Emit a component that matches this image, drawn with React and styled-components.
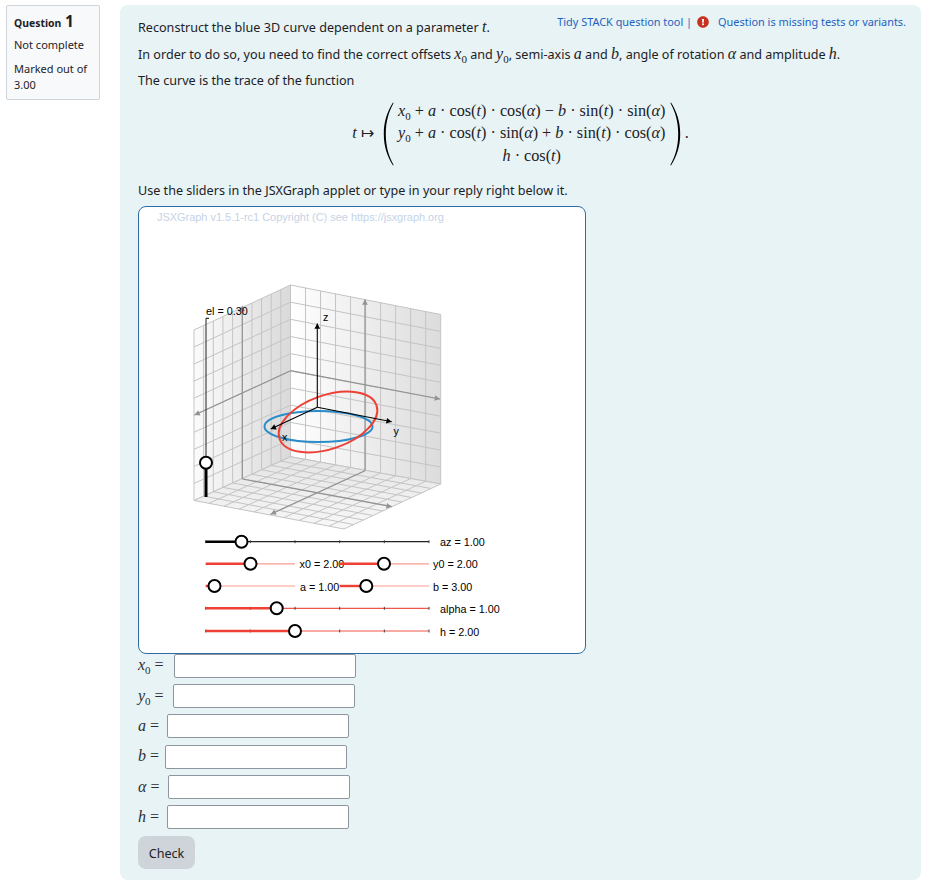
import React from 'react';
import styled, { createGlobalStyle } from 'styled-components';
import { FaExclamationCircle } from 'react-icons/fa';

const GlobalStyle = createGlobalStyle`
  html, body { margin: 0; padding: 0; background: #fff; }
  body { font-family: "Noto Sans", "Open Sans", sans-serif; font-size: 12.6px; line-height: 18.5px; color: #1d2125; }
`;

const Page = styled.div`
  display: flex;
  align-items: flex-start;
  gap: 20px;
  padding: 5px 6px 7px;
  width: 915px;
`;

const Info = styled.aside`
  box-sizing: border-box;
  width: 94px;
  height: 95px;
  padding: 7px 7px;
  background: #f8f9fa;
  border: 1px solid #ced4da;
  border-radius: 2px;
  font-size: 11px;
  line-height: 16px;
`;

const InfoTitle = styled.div`
  font-size: 10.4px;
  font-weight: 700;
  margin-bottom: 6px;
  span { font-size: 15.5px; margin-left: 1px; }
`;

const InfoLine = styled.div`
  margin-bottom: 8px;
`;

const Content = styled.main`
  box-sizing: border-box;
  width: 801px;
  height: 875px;
  padding: 14px 18px 10px;
  background: #e7f3f5;
  border-radius: 8px;
`;

const TidyLink = styled.div`
  float: right;
  display: flex;
  align-items: center;
  gap: 3px;
  margin: -6px -3px 0 0;
  font-size: 10.9px;
  color: #1d62c0;
  svg { color: #ca3120; font-size: 12px; margin: 0 6px 0 2px; }
`;

const Para = styled.p`
  margin: 0 0 ${p => p.$gap ?? 8}px;
`;

const Mi = styled.i`
  font-family: "Liberation Serif", serif;
  font-size: 16px;
  line-height: 0;
`;

const Formula = styled.div`
  display: flex;
  justify-content: center;
  align-items: center;
  height: 70px;
  margin: 1.5px 0 13.5px;
  font-family: "Liberation Serif", serif;
  font-size: 16.2px;
  line-height: 22.5px;
`;

const MapsTo = styled.span`
  margin-right: 9px;
`;

const Paren = styled.svg`
  width: 12px;
  height: 64px;
  transform: ${p => (p.$flip ? 'scaleX(-1)' : 'none')};
`;

const MatrixBody = styled.div`
  display: grid;
  justify-items: center;
  width: 274px;
  white-space: nowrap;
`;

const Sub = styled.sub`
  font-family: "Liberation Serif", serif;
  font-size: 11px;
  line-height: 0;
  font-style: normal;
`;

const Applet = styled.div`
  box-sizing: border-box;
  width: 448px;
  height: 448px;
  background: #fff;
  border: 1px solid #2e6da4;
  border-radius: 8px;
  overflow: hidden;
  svg { display: block; }
`;

const GraphText = styled.text`
  font-family: "Liberation Sans", Arial, sans-serif;
  font-size: ${p => p.$size || 10.8}px;
  fill: ${p => p.$fill || '#000'};
  dominant-baseline: central;
`;

const Inputs = styled.div`
  display: grid;
  row-gap: 6.4px;
`;

const Row = styled.label`
  display: flex;
  align-items: center;
  height: 24px;
`;

const RowLabel = styled.span`
  width: ${p => p.$w}px;
  font-family: "Liberation Serif", serif;
  font-size: 16px;
  color: #2b2f33;
  white-space: nowrap;
`;

const Field = styled.input`
  box-sizing: border-box;
  width: 182px;
  height: 24px;
  background: #fff;
  border: 1px solid #8f959e;
  border-radius: 2px;
`;

const CheckButton = styled.button`
  display: block;
  width: 57px;
  height: 33px;
  margin-top: 7px;
  padding: 2px 0 0;
  background: #ced4da;
  border: 0;
  border-radius: 8px;
  font: inherit;
  color: #1d2125;
`;

const lerp = (a, b, t) => [a[0] + (b[0] - a[0]) * t, a[1] + (b[1] - a[1]) * t];

function Wall({ a, b, c, d, fill }) {
  // a-b and d-c are opposite sides, 10 cells each way
  const lines = [];
  for (let i = 0; i <= 10; i++) {
    const t = i / 10;
    lines.push([lerp(a, b, t), lerp(d, c, t)]);
    lines.push([lerp(a, d, t), lerp(b, c, t)]);
  }
  return (
    <g>
      <polygon points={[a, b, c, d].map(p => p.join(',')).join(' ')} fill={fill} />
      {lines.map(([p, q], i) => (
        <line key={i} x1={p[0]} y1={p[1]} x2={q[0]} y2={q[1]} stroke="#c4c4c4" strokeWidth="1" />
      ))}
    </g>
  );
}

function Arrow({ from, to, color = '#929292', width = 1.2, size = 6 }) {
  const ang = Math.atan2(to[1] - from[1], to[0] - from[0]);
  const pt = (r, off) => [to[0] - r * Math.cos(ang + off), to[1] - r * Math.sin(ang + off)].join(',');
  return (
    <g>
      <line x1={from[0]} y1={from[1]} x2={to[0]} y2={to[1]} stroke={color} strokeWidth={width} />
      <polygon points={`${to.join(',')} ${pt(size, 0.5)} ${pt(size, -0.5)}`} fill={color} />
    </g>
  );
}

function Slider({ x1, x2, y, knob, label, labelX, color = '#ee4035', thin = '#fb9c92', ticks = 5 }) {
  const marks = [];
  for (let i = 0; i <= ticks; i++) marks.push(x1 + ((x2 - x1) * i) / ticks);
  return (
    <g>
      <line x1={x1} x2={x2} y1={y} y2={y} stroke={thin} strokeWidth="1.2" />
      {ticks > 2 && marks.map(m => <line key={m} x1={m} x2={m} y1={y - 1.5} y2={y + 1.5} stroke="#333" strokeWidth="0.9" />)}
      <line x1={x1} x2={knob} y1={y} y2={y} stroke={color} strokeWidth="2.4" />
      <circle cx={knob} cy={y} r="6" fill="#fff" stroke="#000" strokeWidth="2" />
      <GraphText x={labelX} y={y + 0.5}>{label}</GraphText>
    </g>
  );
}

const sliders = [
  { x1: 205.7, x2: 429, y: 541.7, knob: 241.5, label: 'az = 1.00', labelX: 440, color: '#000', thin: '#222' },
  { x1: 205.7, x2: 295, y: 563.8, knob: 250.5, label: 'x0 = 2.00', labelX: 299.5, ticks: 2 },
  { x1: 339.7, x2: 429, y: 563.8, knob: 384, label: 'y0 = 2.00', labelX: 433, ticks: 2 },
  { x1: 205.7, x2: 295, y: 586, knob: 214.5, label: 'a = 1.00', labelX: 300, ticks: 2 },
  { x1: 339.7, x2: 429, y: 586, knob: 366.3, label: 'b = 3.00', labelX: 433, ticks: 2 },
  { x1: 205.7, x2: 429, y: 608.3, knob: 276.7, label: 'alpha = 1.00', labelX: 440, thin: '#f0564a' },
  { x1: 205.7, x2: 429, y: 631, knob: 295, label: 'h = 2.00', labelX: 440, thin: '#f0564a' },
];

const back = [290.5, 285];
const backLow = [290.5, 456.7];
const left = [194, 330];
const leftLow = [194, 500.5];
const right = [440.7, 314.5];
const rightLow = [440.7, 484];
const front = [344, 529];

function Graph() {
  return (
    <svg width="446" height="446" viewBox="139 207 446 446">
      <defs>
        <linearGradient id="leftWall" x1="0" x2="1" y1="0" y2="0">
          <stop offset="0" stopColor="#fbfbfb" />
          <stop offset="1" stopColor="#dadada" />
        </linearGradient>
        <linearGradient id="rightWall" x1="0" x2="1" y1="0" y2="0">
          <stop offset="0" stopColor="#ffffff" />
          <stop offset="1" stopColor="#dcdcdc" />
        </linearGradient>
        <linearGradient id="floor" x1="0" x2="0" y1="0" y2="1">
          <stop offset="0" stopColor="#e4e4e4" />
          <stop offset="1" stopColor="#f8f8f8" />
        </linearGradient>
      </defs>
      <GraphText x="157" y="216.5" $size={10.95} $fill="#c5d3e6">JSXGraph v1.5.1-rc1 Copyright (C) see https://jsxgraph.org</GraphText>

      <Wall a={left} b={back} c={backLow} d={leftLow} fill="url(#leftWall)" />
      <Wall a={back} b={right} c={rightLow} d={backLow} fill="url(#rightWall)" />
      <Wall a={backLow} b={rightLow} c={front} d={leftLow} fill="url(#floor)" />

      <Arrow from={[290.5, 370.7]} to={[194.5, 415]} />
      <Arrow from={[290.5, 370.7]} to={[440, 399]} />
      <Arrow from={[242.3, 479]} to={[242.3, 306]} />
      <Arrow from={[365, 470.7]} to={[365, 299.5]} />
      <Arrow from={[242.3, 479]} to={[391.7, 506.7]} />
      <Arrow from={[365, 470.7]} to={[270.7, 514.3]} />

      <ellipse cx="318.5" cy="426.5" rx="54" ry="15.5" fill="none" stroke="#2a8cc8" strokeWidth="2" />
      <ellipse cx="328" cy="422" rx="51.3" ry="26.9" transform="rotate(-19.1 328 422)" fill="none" stroke="#ee4035" strokeWidth="2" />

      <Arrow from={[317.3, 407.3]} to={[317.3, 323.5]} color="#000" width={1.1} />
      <Arrow from={[317.3, 407.3]} to={[391.7, 421.7]} color="#000" width={1.1} />
      <Arrow from={[317.3, 407.3]} to={[270.7, 429]} color="#000" width={1.1} />
      <GraphText x="323" y="317">z</GraphText>
      <GraphText x="393.5" y="430.5">y</GraphText>
      <GraphText x="282" y="436.5">x</GraphText>

      <line x1="206" x2="206" y1="318.3" y2="497" stroke="#444" strokeWidth="1.2" />
      <line x1="206" x2="209" y1="318.3" y2="318.3" stroke="#000" strokeWidth="1" />
      <line x1="206" x2="206" y1="462.7" y2="497" stroke="#000" strokeWidth="3" />
      <circle cx="206" cy="462.7" r="6" fill="#fff" stroke="#000" strokeWidth="2" />
      <GraphText x="206" y="310.5">el = 0.30</GraphText>

      {sliders.map(s => <Slider key={s.label} {...s} />)}
    </svg>
  );
}

const ParenShape = ({ flip }) => (
  <Paren $flip={flip} viewBox="0 0 12 64">
    <path d="M10 0.5 C4 10 0.8 20 0.8 32 C0.8 44 4 54 10 63.5 L10.6 63 C5.6 54 2.8 44 2.8 32 C2.8 20 5.6 10 10.6 1 Z" fill="#000" />
  </Paren>
);

const rows = [
  { w: 36, name: <><Mi>x</Mi><Sub>0</Sub> =</> },
  { w: 35, name: <><Mi>y</Mi><Sub>0</Sub> =</> },
  { w: 29, name: <><Mi>a</Mi> =</> },
  { w: 27, name: <><Mi>b</Mi> =</> },
  { w: 30, name: <><Mi>α</Mi> =</> },
  { w: 29, name: <><Mi>h</Mi> =</> },
];

export default function App() {
  return (
    <>
      <GlobalStyle />
      <Page>
        <Info>
          <InfoTitle>Question <span>1</span></InfoTitle>
          <InfoLine>Not complete</InfoLine>
          <InfoLine>Marked out of 3.00</InfoLine>
        </Info>
        <Content>
          <TidyLink>
            Tidy STACK question tool | <FaExclamationCircle /> Question is missing tests or variants.
          </TidyLink>
          <Para>Reconstruct the blue 3D curve dependent on a parameter <Mi>t</Mi>.</Para>
          <Para>
            In order to do so, you need to find the correct offsets <Mi>x</Mi><Sub>0</Sub> and <Mi>y</Mi><Sub>0</Sub>, semi-axis <Mi>a</Mi> and <Mi>b</Mi>, angle of rotation <Mi>α</Mi> and amplitude <Mi>h</Mi>.
          </Para>
          <Para>The curve is the trace of the function</Para>
          <Formula>
            <MapsTo><i>t</i> ↦</MapsTo>
            <ParenShape />
            <MatrixBody>
              <div><i>x</i><Sub>0</Sub> + <i>a</i> · cos(<i>t</i>) · cos(<i>α</i>) − <i>b</i> · sin(<i>t</i>) · sin(<i>α</i>)</div>
              <div><i>y</i><Sub>0</Sub> + <i>a</i> · cos(<i>t</i>) · sin(<i>α</i>) + <i>b</i> · sin(<i>t</i>) · cos(<i>α</i>)</div>
              <div><i>h</i> · cos(<i>t</i>)</div>
            </MatrixBody>
            <ParenShape flip />
            <span>&nbsp;.</span>
          </Formula>
          <Para $gap={5}>Use the sliders in the JSXGraph applet or type in your reply right below it.</Para>
          <Applet><Graph /></Applet>
          <Inputs>
            {rows.map((r, i) => (
              <Row key={i}>
                <RowLabel $w={r.w}>{r.name}</RowLabel>
                <Field />
              </Row>
            ))}
          </Inputs>
          <CheckButton>Check</CheckButton>
        </Content>
      </Page>
    </>
  );
}
